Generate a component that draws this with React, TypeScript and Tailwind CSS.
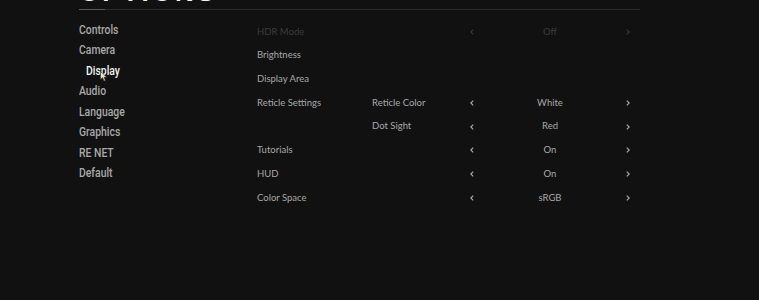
import { FC } from "react";

const menu = ["Controls", "Camera", "Display", "Audio", "Language", "Graphics", "RE NET", "Default"];

type Row = { label?: string; sub?: string; value?: string; dim?: boolean };

const rows: Row[] = [
  { label: "HDR Mode", value: "Off", dim: true },
  { label: "Brightness" },
  { label: "Display Area" },
  { label: "Reticle Settings", sub: "Reticle Color", value: "White" },
  { sub: "Dot Sight", value: "Red" },
  { label: "Tutorials", value: "On" },
  { label: "HUD", value: "On" },
  { label: "Color Space", value: "sRGB" },
];

const Chevron: FC<{ dir: "l" | "r"; dim?: boolean }> = ({ dir, dim }) => (
  <svg width="4" height="6" viewBox="0 0 4 6" className={dim ? "text-[#3a3a3a]" : "text-[#a8a8a8]"}>
    <path
      d={dir === "l" ? "M3.2 0.6 L0.8 3 L3.2 5.4" : "M0.8 0.6 L3.2 3 L0.8 5.4"}
      fill="none"
      stroke="currentColor"
      strokeWidth="1.2"
    />
  </svg>
);

const Cursor: FC = () => (
  <svg width="8" height="11" viewBox="0 0 8 11" className="absolute left-[21px] top-[11px]">
    <path d="M0.5 0.5 L0.5 8.5 L2.5 6.6 L4 10 L5.4 9.4 L4 6.2 L6.8 6.2 Z" fill="#e8e2d6" stroke="#3a3020" strokeWidth="0.6" />
  </svg>
);

export default function App() {
  return (
    <div className="w-[759px] h-[300px] bg-[#111111] overflow-hidden pl-[79px]">
      <header className="w-[561px]">
        <div className="h-[9px] overflow-hidden relative">
          <h1 className="absolute bottom-[4px] left-0 leading-none text-[26px] font-bold tracking-[3px] text-[#f2f2f2] [font-family:'Liberation_Sans',sans-serif]">
            OPTIONS
          </h1>
        </div>
        <div className="flex h-[1px]">
          <div className="w-[26px] bg-[#5a5a5a]" />
          <div className="flex-1 bg-[#2a2a2a]" />
        </div>
      </header>

      <div className="flex pt-[9px]">
        <nav className="w-[178px] [font-family:'Roboto',sans-serif] text-[13px] font-medium">
          {menu.map((m) => (
            <div
              key={m}
              className={
                m === "Display"
                  ? "relative h-[20.5px] flex items-center pl-[7px] text-[#f4f4f4]"
                  : "h-[20.5px] flex items-center text-[#a9a9a9]"
              }
            >
              <span className="inline-block origin-left scale-x-[0.8] whitespace-nowrap">{m}</span>
              {m === "Display" && <Cursor />}
            </div>
          ))}
        </nav>

        <section className="w-[380px] [font-family:'Lato',sans-serif] text-[9.5px] mt-[1px]">
          {rows.map((r, i) => (
            <div key={i} className={`flex items-center h-[23.7px] ${r.dim ? "text-[#3c3c3c]" : "text-[#a8a8a8]"}`}>
              <div className="w-[115px]">{r.label}</div>
              <div className="w-[98px]">{r.sub}</div>
              {r.value && (
                <div className="flex items-center w-[160px]">
                  <Chevron dir="l" dim={r.dim} />
                  <div className="flex-1 text-center">{r.value}</div>
                  <Chevron dir="r" dim={r.dim} />
                </div>
              )}
            </div>
          ))}
        </section>
      </div>
    </div>
  );
}
